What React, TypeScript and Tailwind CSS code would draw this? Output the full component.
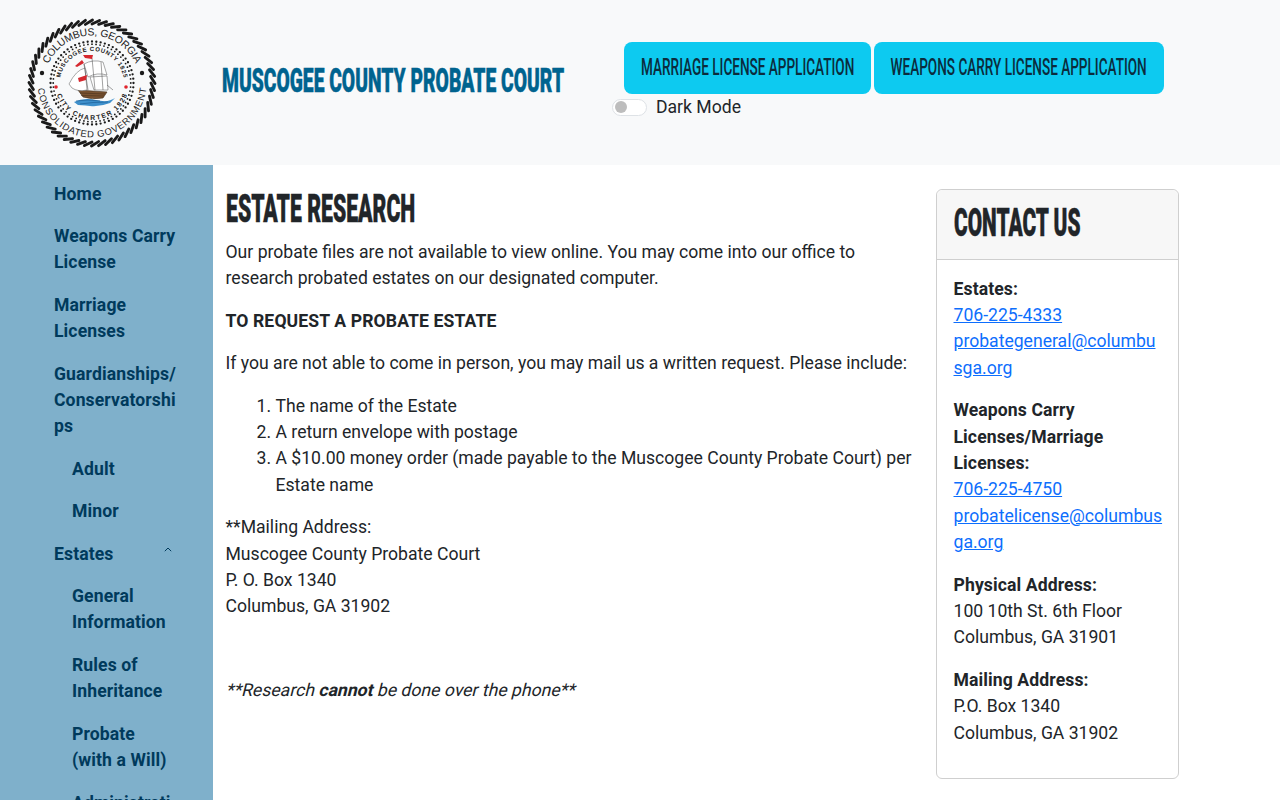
import * as React from "react";

const navLink = "block py-2 font-bold leading-[26.4px] tracking-[0.1px] text-[#003a5c] break-words";
// no Bebas Neue here, so Roboto gets squeezed to the same widths
const bebas = "inline-block whitespace-nowrap font-['Roboto',sans-serif] uppercase";
const heavy = "[-webkit-text-stroke:0.5px_currentColor]";

function Seal() {
  const cx = 92;
  const cy = 83;
  const dots = (r: number, n: number, size: number) =>
    Array.from({ length: n }, (_, i) => {
      const a = (i / n) * Math.PI * 2;
      return <circle key={i} cx={cx + r * Math.cos(a)} cy={cy + r * Math.sin(a)} r={size} fill="#1a1a1a" />;
    });
  const rope = Array.from({ length: 56 }, (_, i) => {
    const a = (i / 56) * Math.PI * 2;
    const b = a + 0.12;
    return (
      <line
        key={i}
        x1={cx + 59 * Math.cos(a)}
        y1={cy + 59 * Math.sin(a)}
        x2={cx + 63 * Math.cos(b)}
        y2={cy + 63 * Math.sin(b)}
        stroke="#1a1a1a"
        strokeWidth="2.9"
        strokeLinecap="round"
      />
    );
  });
  return (
    <svg width="130" height="136" viewBox="27 15 130 136" className="shrink-0" aria-label="Columbus, Georgia seal">
      <defs>
        <path id="topOuter" d="M 44.5 83 A 47.5 47.5 0 0 1 139.5 83" />
        <path id="botOuter" d="M 37.5 83 A 54.5 54.5 0 0 0 146.5 83" />
        <path id="topInner" d="M 60 83 A 32 32 0 0 1 124 83" />
        <path id="botInner" d="M 55 83 A 37 37 0 0 0 129 83" />
      </defs>
      {rope}
      {dots(41.5, 60, 1.15)}
      {dots(38.8, 60, 0.9)}
      <circle cx="42" cy="73" r="2.2" fill="#1a1a1a" />
      <circle cx="142" cy="73" r="2.2" fill="#1a1a1a" />
      <circle cx="56" cy="87" r="1.8" fill="#e0242c" />
      <circle cx="126" cy="87" r="1.8" fill="#e0242c" />
      <g className="font-['Liberation_Sans',sans-serif]" fill="#222">
        <text fontSize="10.4" textAnchor="middle">
          <textPath href="#topOuter" startOffset="50%" textLength="110">COLUMBUS, GEORGIA</textPath>
        </text>
        <text fontSize="9.4" textAnchor="middle">
          <textPath href="#botOuter" startOffset="50%" textLength="160">CONSOLIDATED GOVERNMENT</textPath>
        </text>
        <text fontSize="6" fontWeight="700" textAnchor="middle">
          <textPath href="#topInner" startOffset="50%" textLength="90">MUSCOGEE COUNTY 1825</textPath>
        </text>
        <text fontSize="6.8" fontWeight="700" textAnchor="middle">
          <textPath href="#botInner" startOffset="50%" textLength="92">CITY CHARTER 1828</textPath>
        </text>
      </g>
      {/* ship */}
      <path d="M74 102 Q84 97 96 100 T115 98 L110 103 Q100 107 90 106 T78 105 Z" fill="#3d8fcb" />
      <path d="M76 101 Q88 99 100 101 M80 104 Q92 102 108 102" stroke="#1d5f96" strokeWidth="0.7" fill="none" />
      <path d="M78 90 L107 92 L103 98 Q92 100 83 97 Z" fill="#7a5230" stroke="#3d2a18" strokeWidth="0.6" />
      <path d="M80 93 L105 94 M81 95.5 L104 96" stroke="#3d2a18" strokeWidth="0.5" fill="none" />
      <path d="M69 84 Q76 70 85 68 L87 90 Q78 92 72 88 Z" fill="#fff" stroke="#555" strokeWidth="0.5" />
      <path d="M84 64 Q93 59 103 62 L107 75 Q97 72 88 77 Z" fill="#fff" stroke="#555" strokeWidth="0.5" />
      <path d="M90 77 L107 76 L108 90 L94 90 Z" fill="#fff" stroke="#555" strokeWidth="0.5" />
      <path d="M92 58 L95 90 M84 64 L88 90 M101 62 L103 90 M107 85 L113 90" stroke="#444" strokeWidth="0.5" fill="none" />
      <path d="M78 78 L87 75 L86 80 L79 82 Z" fill="#d5282f" />
      <path d="M75 66 L82 60 L84 63 L77 67 Z" fill="#d5282f" />
      <path d="M83 55 L93 55 L92 59 L85 58 Z" fill="#d5282f" />
    </svg>
  );
}

function Header() {
  const btn = "flex h-[52px] items-center justify-center rounded-lg bg-[#0dcaf0] pb-px text-[#0b2c3d]";
  return (
    <header className="flex h-[165px] shrink-0 bg-[#f8f9fa]">
      <div className="flex w-[222px] shrink-0 items-start pl-[27px] pt-[15px]">
        <Seal />
      </div>
      <div className="flex w-[390px] shrink-0 items-start pt-[63px]">
        <h1 className={`${bebas} ${heavy} origin-left scale-x-[.584] text-[33px] font-black leading-[36px] text-[#00638f]`}>
          Muscogee County Probate Court
        </h1>
      </div>
      <div className="flex flex-col pt-[42px]">
        <div className="flex gap-[3px] pl-3">
          <a className={`${btn} w-[247px]`}>
            <span className={`${bebas} scale-x-[.565] text-[24px] font-medium`}>Marriage License Application</span>
          </a>
          <a className={`${btn} w-[290px]`}>
            <span className={`${bebas} scale-x-[.565] text-[24px] font-medium`}>Weapons Carry License Application</span>
          </a>
        </div>
        <label className="flex items-center">
          <span className="flex h-[17px] w-[35px] items-center rounded-full border border-[#dee2e6] bg-white pl-[2px]">
            <span className="h-[12px] w-[12px] rounded-full bg-[#bdbdbd]" />
          </span>
          <span className="ml-[9px] text-[17.6px] leading-[26px] text-[#212529]">Dark Mode</span>
        </label>
      </div>
    </header>
  );
}

function Sidebar() {
  const sub = "pl-[18px]";
  return (
    <nav className="h-[635px] w-[213px] shrink-0 overflow-hidden bg-[#7fb0cb] pl-[54px] pr-[36px] pt-[7.6px]">
      <a className={navLink}>Home</a>
      <a className={navLink}>Weapons Carry License</a>
      <a className={navLink}>Marriage Licenses</a>
      <a className={navLink}>Guardianships/ Conservatorships</a>
      <div className={sub}>
        <a className={navLink}>Adult</a>
        <a className={navLink}>Minor</a>
      </div>
      <a className={`${navLink} flex items-center justify-between`}>
        <span>Estates</span>
        <svg width="8" height="5" viewBox="0 0 8 5" className="mb-[9px] mr-[5px]" fill="none" stroke="#003a5c" strokeWidth="1">
          <path d="M0.8 4.2 L4 1 L7.2 4.2" />
        </svg>
      </a>
      <div className={sub}>
        <a className={navLink}>General Information</a>
        <a className={navLink}>Rules of Inheritance</a>
        <a className={navLink}>
          Probate
          <br />
          (with a Will)
        </a>
        <a className={navLink}>Administration</a>
      </div>
    </nav>
  );
}

function Contact() {
  const link = "text-[#0d6efd] underline break-all";
  const label = "font-bold tracking-[0.1px]";
  return (
    <aside className="h-[590px] w-[243px] shrink-0 rounded-md border border-[#cfcfcf] bg-white">
      <div className="flex h-[70px] items-center rounded-t-md border-b border-[#cfcfcf] bg-[#f7f7f7] pb-1 pl-[16.5px]">
        <h2 className={`${bebas} ${heavy} origin-left scale-x-[.549] text-[38px] font-black leading-[40px] text-[#212529]`}>Contact Us</h2>
      </div>
      <div className="pl-[16.5px] pr-[14px] pt-[15.6px]">
        <p className="mb-4">
          <b className={label}>Estates:</b>
          <br />
          <a className={link}>706-225-4333</a>
          <br />
          <a className={link}>probategeneral@columbusga.org</a>
        </p>
        <p className="mb-4">
          <b className={label}>Weapons Carry Licenses/Marriage Licenses:</b>
          <br />
          <a className={link}>706-225-4750</a>
          <br />
          <a className={link}>probatelicense@columbusga.org</a>
        </p>
        <p className="mb-4">
          <b className={label}>Physical Address:</b>
          <br />
          100 10th St. 6th Floor
          <br />
          Columbus, GA 31901
        </p>
        <p>
          <b className={label}>Mailing Address:</b>
          <br />
          P.O. Box 1340
          <br />
          Columbus, GA 31902
        </p>
      </div>
    </aside>
  );
}

export default function App() {
  return (
    <div className="flex h-[800px] flex-col overflow-hidden bg-white font-['Roboto',sans-serif] text-[17.6px] leading-[26.4px] text-[#212529]">
      <Header />
      <div className="flex min-h-0 flex-1">
        <Sidebar />
        <main className="flex pl-[12.5px] pt-6">
          <div className="w-[698px] shrink-0 pt-px">
            <h2 className={`${bebas} ${heavy} mb-[10.7px] origin-left scale-x-[.559] text-[38px] font-black leading-[38px] text-[#212529]`}>
              Estate Research
            </h2>
            <p className="mb-4">
              Our probate files are not available to view online. You may come into our office to research probated estates on our designated computer.
            </p>
            <p className="mb-4 font-bold tracking-[0.11px]">TO REQUEST A PROBATE ESTATE</p>
            <p className="mb-[16.3px]">If you are not able to come in person, you may mail us a written request. Please include:</p>
            <ol className="mb-4 list-decimal pl-[50px]">
              <li>The name of the Estate</li>
              <li>A return envelope with postage</li>
              <li>A $10.00 money order (made payable to the Muscogee County Probate Court) per Estate name</li>
            </ol>
            <p className="mb-[57.5px]">
              **Mailing Address:
              <br />
              Muscogee County Probate Court
              <br />
              P. O. Box 1340
              <br />
              Columbus, GA 31902
            </p>
            <p className="-ml-[2px] origin-bottom-left skew-x-[-14deg]">
              **Research <b>cannot</b> be done over the phone**
            </p>
          </div>
          <div className="ml-[12.5px]">
            <Contact />
          </div>
        </main>
      </div>
    </div>
  );
}
